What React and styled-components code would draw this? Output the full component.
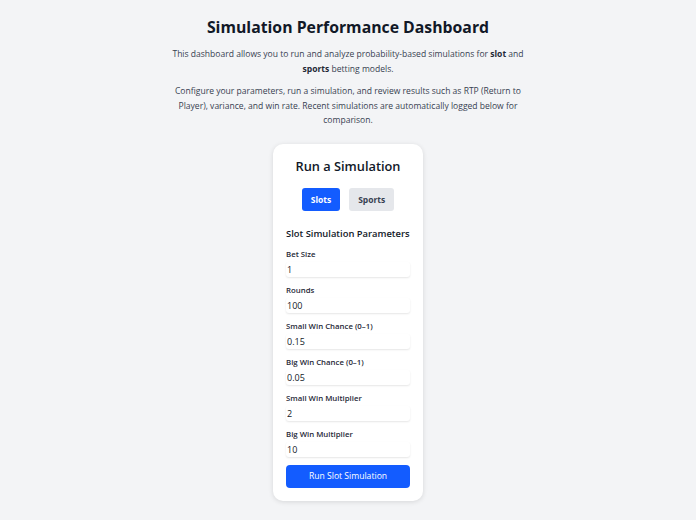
import React, { useState } from "react";
import styled, { createGlobalStyle } from "styled-components";

const Global = createGlobalStyle`
  html, body { margin: 0; padding: 0; background: #f3f4f6; }
  body { font-family: "Open Sans", "Noto Sans", sans-serif; color: #1f2937; }
  * { box-sizing: border-box; }
`;

const Page = styled.div`
  display: flex;
  flex-direction: column;
  align-items: center;
  padding-top: 14px;
  min-height: 520px;
`;

const Title = styled.h1`
  margin: 0;
  font-size: 15.8px;
  line-height: 26px;
  font-weight: 700;
  color: #111827;
`;

const Intro = styled.p`
  margin: ${(p) => p.$top}px 0 0;
  width: 356px;
  text-align: center;
  font-size: 8.55px;
  line-height: 14.5px;
  color: #374151;
  b { font-weight: 700; color: #1f2937; }
`;

const Card = styled.div`
  margin-top: 16px;
  width: 150px;
  background: #fff;
  border-radius: 10px;
  box-shadow: 0 1px 5px rgba(0, 0, 0, 0.12);
  padding: 12px 13px 13px;
  display: flex;
  flex-direction: column;
`;

const CardTitle = styled.h2`
  margin: 0;
  text-align: center;
  font-size: 12.8px;
  line-height: 20px;
  font-weight: 600;
  color: #111827;
`;

const Tabs = styled.div`
  display: flex;
  justify-content: center;
  gap: 9px;
  margin-top: 12px;
`;

const Tab = styled.button`
  border: none;
  border-radius: 3px;
  height: 23px;
  padding: 0 ${(p) => p.$pad}px;
  font-family: inherit;
  font-size: 8.5px;
  font-weight: 700;
  background: ${(p) => (p.$active ? "#135cff" : "#e5e7eb")};
  color: ${(p) => (p.$active ? "#fff" : "#374151")};
  cursor: pointer;
`;

const Section = styled.h3`
  margin: 15px 0 0;
  font-size: 9.4px;
  line-height: 16px;
  font-weight: 600;
  color: #111827;
  white-space: nowrap;
`;

const Fields = styled.div`
  display: flex;
  flex-direction: column;
  gap: 8px;
  margin-top: 7px;
`;

const Field = styled.label`
  display: flex;
  flex-direction: column;
  gap: 2px;
`;

const Label = styled.span`
  font-size: 7.8px;
  line-height: 11px;
  font-weight: 600;
  color: #1f2937;
  white-space: nowrap;
`;

const Input = styled.input`
  height: 15px;
  width: 100%;
  border: none;
  border-radius: 3px;
  background: #fff;
  box-shadow: 0 1px 2px rgba(0, 0, 0, 0.1);
  padding: 0 1px;
  font-family: inherit;
  font-size: 9px;
  color: #111827;
  outline: none;
`;

const RunButton = styled.button`
  margin-top: 8px;
  height: 23px;
  border: none;
  border-radius: 4px;
  background: #135cff;
  color: #fff;
  font-family: inherit;
  font-size: 8.6px;
  font-weight: 500;
  cursor: pointer;
`;

const fields = [
  ["Bet Size", "1"],
  ["Rounds", "100"],
  ["Small Win Chance (0–1)", "0.15"],
  ["Big Win Chance (0–1)", "0.05"],
  ["Small Win Multiplier", "2"],
  ["Big Win Multiplier", "10"],
];

export default function App() {
  const [mode, setMode] = useState("slots");
  return (
    <>
      <Global />
      <Page>
        <Title>Simulation Performance Dashboard</Title>
        <Intro $top={7}>
          This dashboard allows you to run and analyze probability-based simulations for <b>slot</b> and{" "}
          <b>sports</b> betting models.
        </Intro>
        <Intro $top={8}>
          Configure your parameters, run a simulation, and review results such as RTP (Return to Player),
          variance, and win rate. Recent simulations are automatically logged below for comparison.
        </Intro>
        <Card>
          <CardTitle>Run a Simulation</CardTitle>
          <Tabs>
            <Tab $active={mode === "slots"} $pad={9} onClick={() => setMode("slots")}>Slots</Tab>
            <Tab $active={mode === "sports"} $pad={9} onClick={() => setMode("sports")}>Sports</Tab>
          </Tabs>
          <Section>Slot Simulation Parameters</Section>
          <Fields>
            {fields.map(([l, v]) => (
              <Field key={l}>
                <Label>{l}</Label>
                <Input defaultValue={v} />
              </Field>
            ))}
          </Fields>
          <RunButton>Run Slot Simulation</RunButton>
        </Card>
      </Page>
    </>
  );
}
